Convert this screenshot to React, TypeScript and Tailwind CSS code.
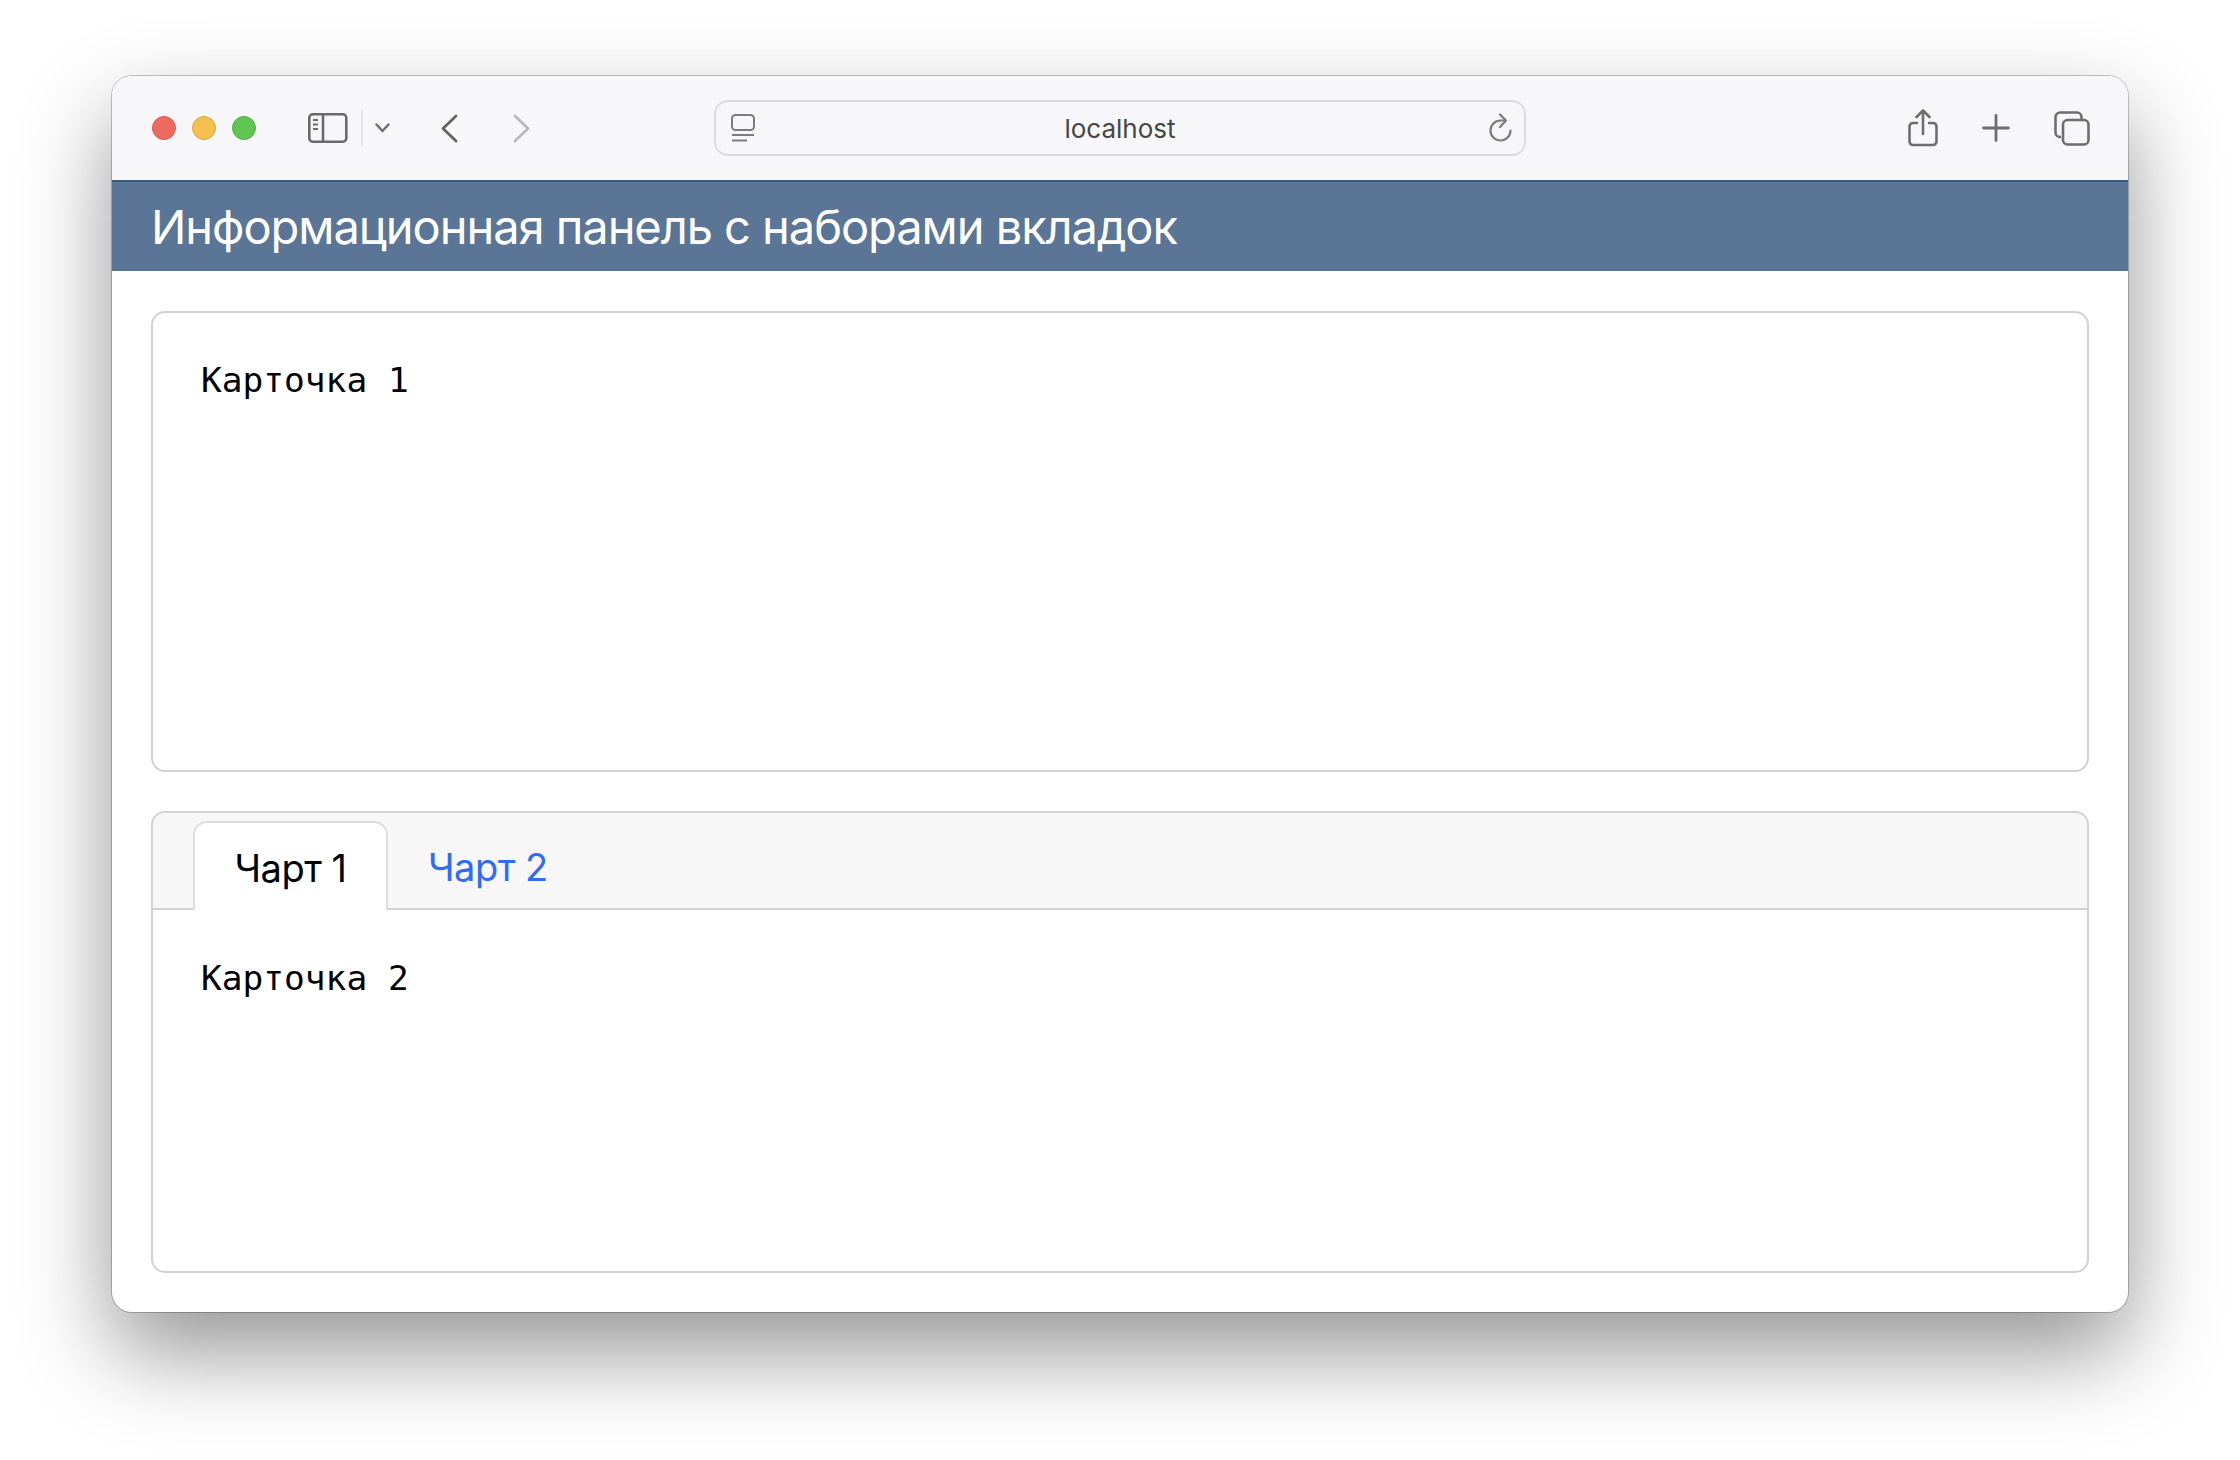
const ui = 'font-["Inter","Liberation_Sans",sans-serif]'
const mono = 'font-["DejaVu_Sans_Mono","Liberation_Mono",monospace]'

function SidebarIcon() {
  return (
    <svg width="40" height="30" viewBox="0 0 40 30" fill="none" stroke="#6a6a6c" strokeWidth="2.6" className="ml-[52px]">
      <rect x="1.3" y="1.3" width="37" height="27.4" rx="3.5" />
      <path d="M15 1.3v27.4" />
      <path d="M5 7h5M5 11.5h5M5 16h5" strokeWidth="2" />
    </svg>
  )
}

function Chevron({ d, color, w, h, sw, className }: { d: string; color: string; w: number; h: number; sw: number; className: string }) {
  return (
    <svg width={w} height={h} viewBox={`0 0 ${w} ${h}`} fill="none" stroke={color} strokeWidth={sw} strokeLinecap="round" strokeLinejoin="round" className={className}>
      <path d={d} />
    </svg>
  )
}

function Toolbar() {
  return (
    <div className="flex items-center h-[104px] pl-10 bg-[#f7f7f9]">
      <div className="flex gap-4">
        <div className="size-6 rounded-full bg-[#ee6a5f] border border-[#d9584e]" />
        <div className="size-6 rounded-full bg-[#f5bf4f] border border-[#dca83e]" />
        <div className="size-6 rounded-full bg-[#61c554] border border-[#52ad46]" />
      </div>
      <SidebarIcon />
      <div className="w-[2px] h-9 ml-[13px] bg-[#e6e6e8]" />
      <Chevron d="M1.5 1.5 7.5 8l6-6.5" color="#6e6e70" w={15} h={10} sw={2.4} className="ml-[12px]" />
      <Chevron d="M15 2 2 14.5 15 27" color="#626264" w={17} h={29} sw={2.8} className="ml-[51px]" />
      <Chevron d="M2 2 15 14.5 2 27" color="#b9b9bb" w={17} h={29} sw={2.8} className="ml-[55px]" />

      <div className="relative flex items-center justify-between w-[812px] h-[56px] ml-[184px] pl-[15px] pr-[11px] rounded-[14px] border-2 border-[#dcdcde]">
        <svg width="24" height="28" viewBox="0 0 24 28" fill="none" stroke="#7c7c7e" strokeWidth="2">
          <rect x="1" y="1" width="22" height="15" rx="3.5" />
          <path d="M1 21h22" />
          <path d="M1 26.5h15" />
        </svg>
        <span className={`absolute inset-0 flex items-center justify-center text-[#464648] text-[26px] ${ui}`}>localhost</span>
        <svg width="24" height="30" viewBox="0 0 24 30" fill="none" stroke="#7c7c7e" strokeWidth="2.2" strokeLinecap="round" strokeLinejoin="round">
          <path d="M16 7.5h-4.5A10 10 0 1 0 21.5 17.5" />
          <path d="M11 1.5 17 7.5 11 14" />
        </svg>
      </div>

      <svg width="30" height="38" viewBox="0 0 30 38" fill="none" stroke="#6e6e70" strokeWidth="2.6" strokeLinecap="round" strokeLinejoin="round" className="ml-[382px]">
        <path d="M9 14H5a3.5 3.5 0 0 0-3.5 3.5v15A3.5 3.5 0 0 0 5 36h20a3.5 3.5 0 0 0 3.5-3.5v-15A3.5 3.5 0 0 0 25 14h-4" />
        <path d="M15 25V2M8.5 8 15 1.5 21.5 8" />
      </svg>
      <svg width="28" height="28" viewBox="0 0 28 28" fill="none" stroke="#6e6e70" strokeWidth="2.8" strokeLinecap="round" className="ml-[44px]">
        <path d="M14 1.5v25M1.5 14h25" />
      </svg>
      <svg width="36" height="35" viewBox="0 0 36 35" fill="none" stroke="#6e6e70" strokeWidth="2.6" className="ml-[44px]">
        <path d="M7 26H6a4.5 4.5 0 0 1-4.5-4.5V6A4.5 4.5 0 0 1 6 1.5h17A4.5 4.5 0 0 1 27.5 6v2" />
        <rect x="9" y="9" width="25.5" height="24.5" rx="4.5" />
      </svg>
    </div>
  )
}

function CardText({ children }: { children: React.ReactNode }) {
  return <p className={`text-[34.5px] leading-[40px] text-black ${mono}`}>{children}</p>
}

export default function App() {
  return (
    <div className="min-h-[1460px] pt-[76px] pl-[112px] bg-white">
      <div className="w-[2016px] h-[1236px] rounded-[20px] bg-white overflow-hidden shadow-[0_40px_90px_rgba(0,0,0,0.42),0_0_0_1px_rgba(0,0,0,0.22)]">
        <Toolbar />
        <header className="flex items-center h-[91px] pl-[39px] pt-[2px] bg-[#5a7595] border-t-2 border-[#3f5c80]">
          <h1 className={`text-[47px] tracking-[-1.05px] text-white ${ui}`}>Информационная панель с наборами вкладок</h1>
        </header>
        <main className="flex flex-col gap-[39px] pt-10 pl-[39px] pr-[39px]">
          <div className="h-[461px] rounded-[14px] border-2 border-[#d2d2d2] bg-white">
            <div className="pt-[47px] pl-[48px]">
              <CardText>Карточка 1</CardText>
            </div>
          </div>
          <div className="h-[462px] rounded-[14px] border-2 border-[#d2d2d2] overflow-hidden bg-white">
            <div className="flex h-[97px] pt-[8px] pl-10 bg-[#f7f7f7] border-b-2 border-[#d2d2d2]">
              <div className={`flex items-center justify-center w-[195px] h-[89px] pt-1 rounded-t-[14px] border-2 border-b-0 border-[#dedede] bg-white text-black text-[38px] tracking-[-0.5px] ${ui}`}>Чарт 1</div>
              <div className={`flex items-center pl-[40px] pt-[6px] h-[87px] text-[#2f6bf5] text-[38px] tracking-[-0.5px] ${ui}`}>Чарт 2</div>
            </div>
            <div className="pt-[48px] pl-[48px]">
              <CardText>Карточка 2</CardText>
            </div>
          </div>
        </main>
      </div>
    </div>
  )
}
